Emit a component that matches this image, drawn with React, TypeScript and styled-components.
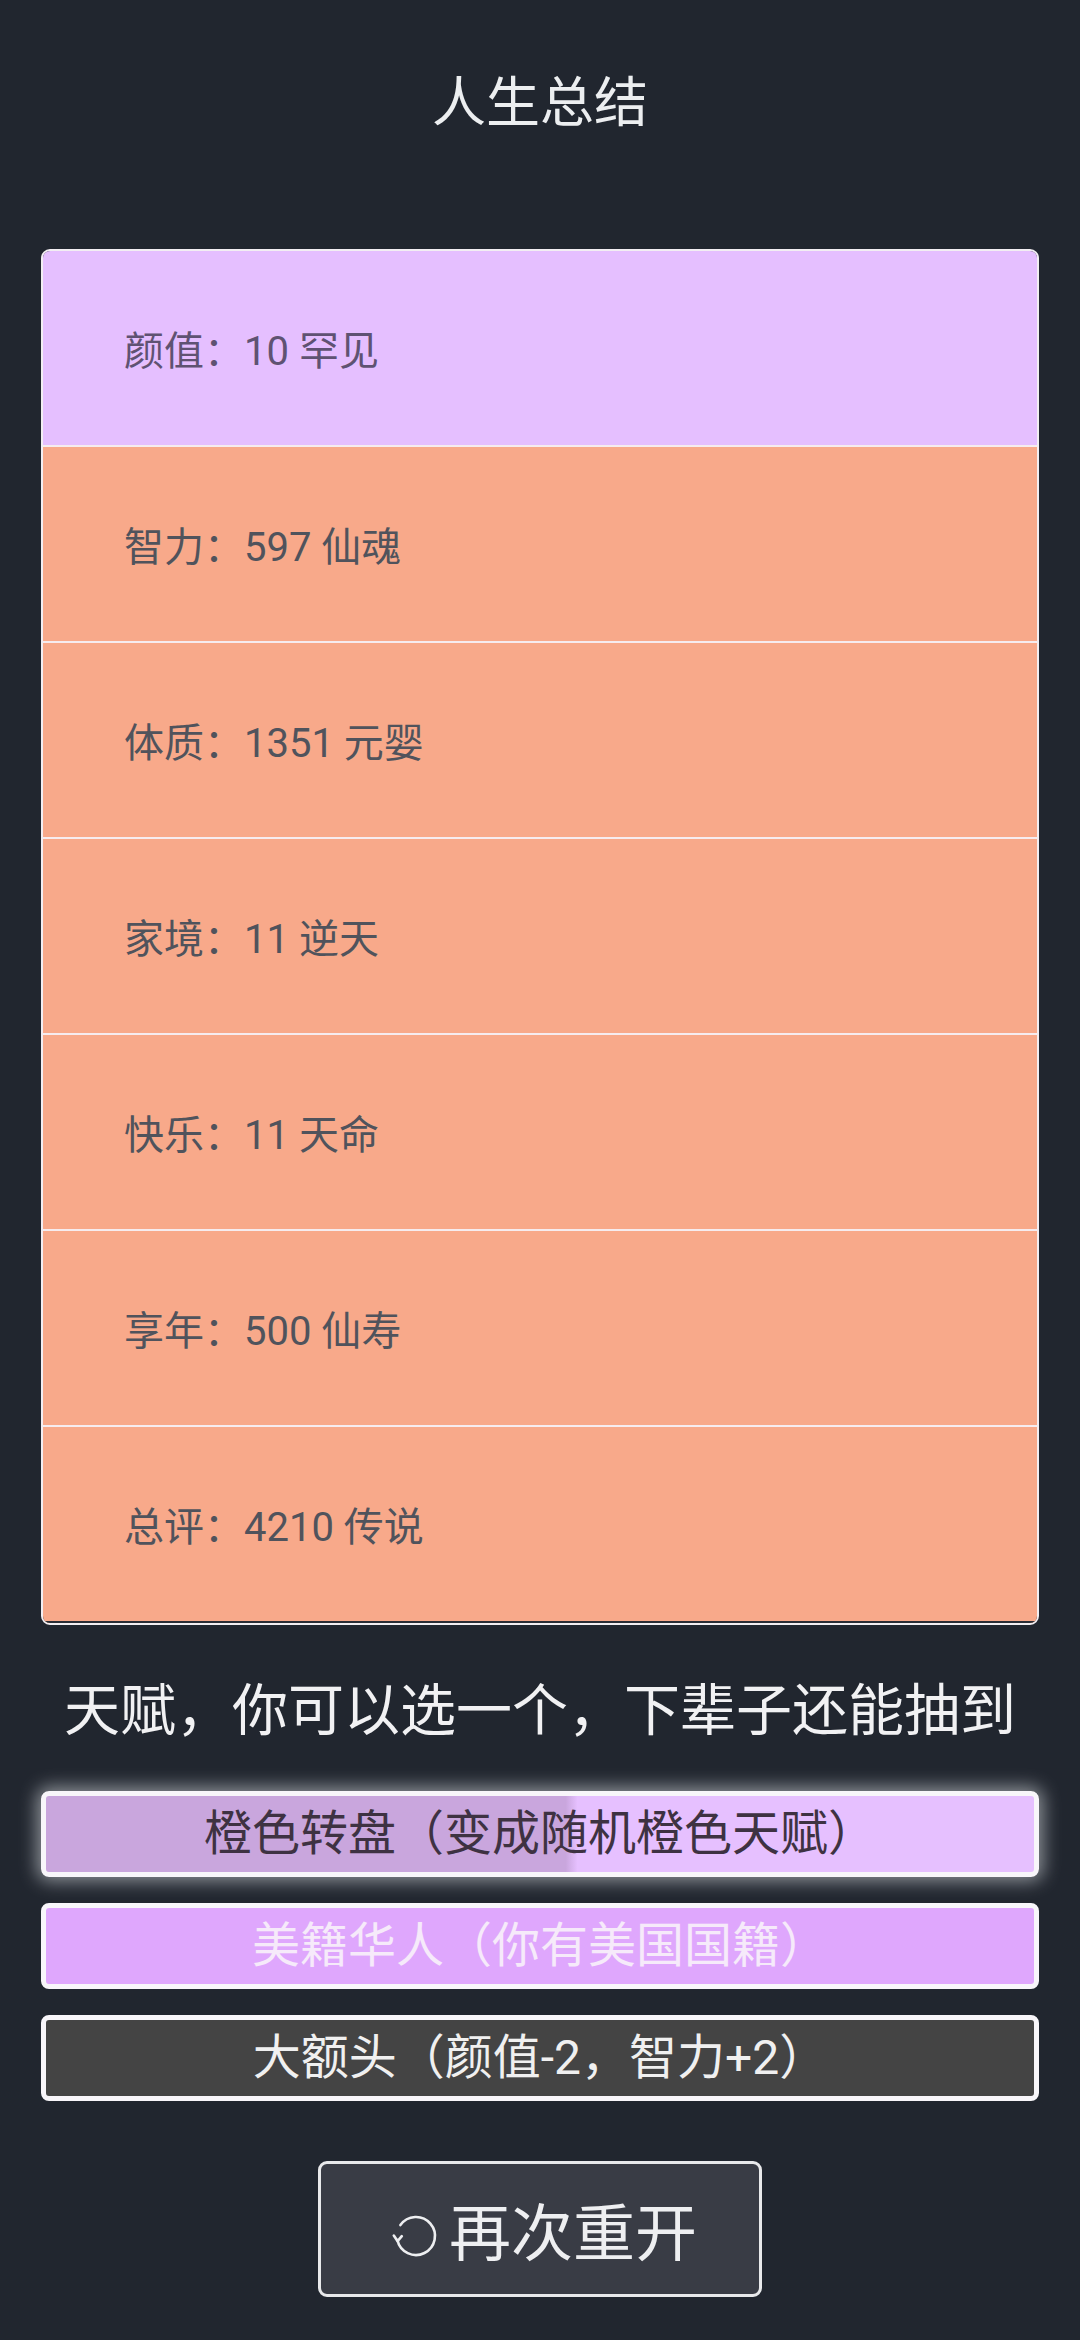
import React from "react";
import styled, { createGlobalStyle } from "styled-components";

const Global = createGlobalStyle`
  html, body {
    margin: 0;
    padding: 0;
    background: #21262f;
  }
  body {
    font-family: Roboto, "Noto Sans CJK SC", "Noto Sans", sans-serif;
    -webkit-font-smoothing: antialiased;
  }
  * { box-sizing: border-box; }
`;

const Page = styled.main`
  width: 1080px;
  min-height: 2340px;
  padding: 66px 41px 40px;
  display: flex;
  flex-direction: column;
  align-items: stretch;
  background: #21262f;
`;

const Title = styled.h1`
  margin: 0;
  font-size: 54px;
  font-weight: 400;
  line-height: 76px;
  text-align: center;
  color: #eceef0;
`;

const Card = styled.section`
  margin-top: 107px;
  border: 2px solid #f2eef2;
  border-radius: 9px;
  overflow: hidden;
  display: flex;
  flex-direction: column;
  background: #21262f;
`;

const Row = styled.div<{ $bg: string; $fg: string; $last?: boolean }>`
  height: 196px;
  display: flex;
  align-items: center;
  padding-left: 81px;
  background: ${(p) => p.$bg};
  color: ${(p) => p.$fg};
  font-size: 40px;
  border-bottom: 2px solid ${(p) => (p.$last ? "#2a2d35" : "#f6ecef")};
`;

const Subtitle = styled.h2`
  margin: 47px 0 0;
  font-size: 56px;
  font-weight: 400;
  line-height: 78px;
  text-align: center;
  color: #f1f1f3;
`;

const Talents = styled.div`
  margin-top: 41px;
  display: flex;
  flex-direction: column;
  gap: 26px;
`;

const Talent = styled.button<{
  $bg: string;
  $fg: string;
  $glow?: boolean;
  $progress?: number;
  $shade?: string;
}>`
  height: 86px;
  width: 100%;
  border: 5px solid #f8f6fa;
  border-radius: 8px;
  font-family: Roboto, "Noto Sans CJK SC", sans-serif;
  font-size: 48px;
  line-height: 1;
  color: ${(p) => p.$fg};
  background: ${(p) =>
    p.$progress !== undefined
      ? `linear-gradient(90deg, ${p.$shade} 0%, ${p.$shade} ${p.$progress - 0.6}%, ${p.$bg} ${p.$progress + 0.6}%, ${p.$bg} 100%)`
      : p.$bg};
  box-shadow: ${(p) => (p.$glow ? "0 0 18px 4px rgba(235,238,242,0.55)" : "none")};
  display: flex;
  align-items: center;
  justify-content: center;
  padding: 0;
`;

const Restart = styled.button`
  align-self: center;
  margin-top: 60px;
  width: 444px;
  height: 136px;
  border: 3px solid #e8e9eb;
  border-radius: 9px;
  background: #393c45;
  color: #eeeff1;
  font-family: Roboto, "Noto Sans CJK SC", sans-serif;
  font-size: 62px;
  display: flex;
  align-items: center;
  justify-content: center;
  gap: 8px;
  padding: 0 0 0 8px;
`;

const Icon = styled.svg`
  width: 50px;
  height: 50px;
  flex: none;
  margin-top: 14px;
`;

const stats = [
  { label: "颜值：10 罕见", bg: "#e5bfff", fg: "#5f5272" },
  { label: "智力：597 仙魂", bg: "#f8a98a", fg: "#50535c" },
  { label: "体质：1351 元婴", bg: "#f8a98a", fg: "#50535c" },
  { label: "家境：11 逆天", bg: "#f8a98a", fg: "#50535c" },
  { label: "快乐：11 天命", bg: "#f8a98a", fg: "#50535c" },
  { label: "享年：500 仙寿", bg: "#f8a98a", fg: "#50535c" },
  { label: "总评：4210 传说", bg: "#f8a98a", fg: "#50535c" },
];

const RestartIcon = () => (
  <Icon viewBox="0 0 50 50" fill="none" stroke="#eeeff1" strokeWidth={2.6} strokeLinecap="round" strokeLinejoin="round">
    <path d="M9.4 14.1 A19 19 0 1 1 6.4 29" />
    <path d="M2.8 24.6 L6.6 30.2 L10.8 25.2" />
  </Icon>
);

export default function App() {
  return (
    <>
      <Global />
      <Page>
        <Title>人生总结</Title>
        <Card>
          {stats.map((s, i) => (
            <Row key={s.label} $bg={s.bg} $fg={s.fg} $last={i === stats.length - 1}>
              {s.label}
            </Row>
          ))}
        </Card>
        <Subtitle>天赋，你可以选一个，下辈子还能抽到</Subtitle>
        <Talents>
          <Talent $bg="#e6c0ff" $shade="#c9a6dd" $progress={53.2} $fg="#3e3242" $glow>
            橙色转盘（变成随机橙色天赋）
          </Talent>
          <Talent $bg="#dfa7fd" $fg="#f6eafa">
            美籍华人（你有美国国籍）
          </Talent>
          <Talent $bg="#444444" $fg="#f0f0f0">
            大额头（颜值-2，智力+2）
          </Talent>
        </Talents>
        <Restart>
          <RestartIcon />
          再次重开
        </Restart>
      </Page>
    </>
  );
}
